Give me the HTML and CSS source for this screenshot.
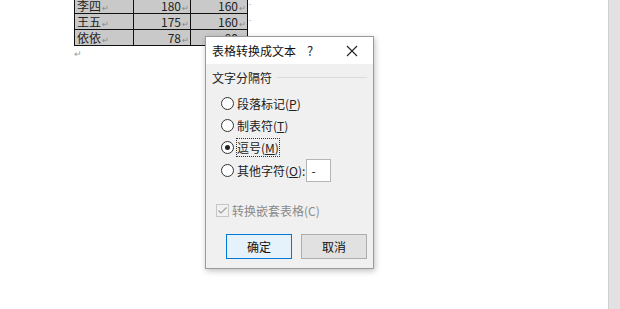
FILE: index.html
```html
<!DOCTYPE html>
<html lang="zh-CN">
<head>
    <meta charset="UTF-8">
    <title>表格转换成文本</title>
    <link rel="stylesheet" href="styles.css">
</head>
<body>
    <div class="workspace">
        <!-- Document page -->
        <div class="page">
            <table class="doc-table">
                <tr>
                    <td class="name">李四<span class="mark">↵</span></td>
                    <td class="num">180<span class="mark">↵</span></td>
                    <td class="num">160<span class="mark">↵</span></td>
                    <td class="row-end">.</td>
                </tr>
                <tr>
                    <td class="name">王五<span class="mark">↵</span></td>
                    <td class="num">175<span class="mark">↵</span></td>
                    <td class="num">160<span class="mark">↵</span></td>
                    <td class="row-end">.</td>
                </tr>
                <tr>
                    <td class="name">依依<span class="mark">↵</span></td>
                    <td class="num">78<span class="mark">↵</span></td>
                    <td class="num">90<span class="mark">↵</span></td>
                    <td class="row-end">.</td>
                </tr>
            </table>
            <div class="para-mark">↵</div>
        </div>

        <!-- Scrollbar -->
        <div class="scrollbar"></div>

        <!-- Dialog -->
        <div class="dialog">
            <div class="title-bar">
                <span class="title">表格转换成文本</span>
                <span class="help">?</span>
                <svg class="close" width="12" height="12" viewBox="0 0 12 12">
                    <path d="M1 1 L11 11 M11 1 L1 11" stroke="#222" stroke-width="1.1" fill="none"/>
                </svg>
            </div>
            <div class="dialog-body">
                <div class="group-label">
                    <span>文字分隔符</span>
                    <span class="group-line"></span>
                </div>
                <div class="options">
                    <div class="option"><span class="radio"></span><span>段落标记(<u>P</u>)</span></div>
                    <div class="option"><span class="radio"></span><span>制表符(<u>T</u>)</span></div>
                    <div class="option"><span class="radio checked"></span><span class="focused">逗号(<u>M</u>)</span></div>
                    <div class="option other">
                        <span class="radio"></span><span>其他字符(<u>O</u>):</span>
                        <span class="char-input">-</span>
                    </div>
                </div>
                <div class="nested">
                    <svg class="check" width="13" height="13" viewBox="0 0 13 13">
                        <rect x="0.5" y="0.5" width="12" height="12" fill="#f0f0f0" stroke="#c6c6c6"/>
                        <path d="M2.5 6.5 L5 9 L10.5 3.5" stroke="#a0a0a0" stroke-width="1.2" fill="none"/>
                    </svg>
                    <span>转换嵌套表格(C)</span>
                </div>
                <div class="buttons">
                    <button class="btn primary">确定</button>
                    <button class="btn">取消</button>
                </div>
            </div>
        </div>
    </div>
</body>
</html>
```

FILE: styles.css
```css
body {
    margin: 0;
    font-family: "Noto Sans CJK SC", "Noto Sans", sans-serif;
    font-size: 12px;
    color: #222;
    background: #fff;
}

.workspace {
    position: relative;
    width: 620px;
    height: 309px;
    overflow: hidden;
    display: flex;
}

.page {
    flex: 1;
    padding-left: 74px;
}

/* Document table */
.doc-table {
    border-collapse: collapse;
    margin-top: -3px;
    font-size: 12px;
}

.doc-table td {
    border: 1px solid #111;
    background: #c9c9c9;
    height: 15px;
    line-height: 15px;
    padding: 0 2px;
    white-space: nowrap;
    overflow: hidden;
}

.doc-table td.name {
    width: 54px;
    text-align: left;
}

.doc-table td.num {
    width: 53px;
    text-align: right;
    padding-right: 1px;
}

.doc-table td.row-end {
    border: none;
    background: none;
    color: #999;
    font-size: 8px;
    line-height: 8px;
    vertical-align: top;
    padding-left: 1px;
}

.mark {
    color: #888;
    font-size: 8px;
    line-height: 8px;
    margin-left: 1px;
}

.para-mark {
    color: #999;
    font-size: 9px;
    line-height: 10px;
    margin-top: 3px;
}

.scrollbar {
    width: 11px;
    background: #e2e2e2;
    border-left: 1px solid #cfcfcf;
}

/* Dialog */
.dialog {
    position: absolute;
    left: 205px;
    top: 36px;
    width: 167px;
    height: 231px;
    background: #f0f0f0;
    border: 1px solid #9a9a9a;
    box-shadow: 1px 2px 6px rgba(0, 0, 0, 0.25);
    display: flex;
    flex-direction: column;
}

.title-bar {
    height: 27px;
    background: #fff;
    display: flex;
    align-items: center;
    padding-left: 6px;
}

.title {
    font-size: 12px;
    color: #111;
}

.help {
    margin-left: 11px;
    font-size: 13px;
}

.close {
    margin-left: 33px;
}

.dialog-body {
    padding: 5px 6px 0 6px;
    display: flex;
    flex-direction: column;
}

.group-label {
    display: flex;
    align-items: center;
    gap: 5px;
    color: #222;
}

.group-line {
    flex: 1;
    height: 1px;
    background: #dcdcdc;
}

.options {
    margin-top: 6px;
    padding-left: 9px;
    display: flex;
    flex-direction: column;
}

.option {
    display: flex;
    align-items: center;
    height: 22px;
}

.radio {
    width: 11px;
    height: 11px;
    border: 1px solid #333;
    border-radius: 50%;
    background: #fff;
    margin-right: 3px;
    position: relative;
}

.radio.checked::after {
    content: "";
    position: absolute;
    left: 3px;
    top: 3px;
    width: 5px;
    height: 5px;
    border-radius: 50%;
    background: #222;
}

.focused {
    outline: 1px dotted #333;
    outline-offset: 0;
}

.option.other {
    height: 25px;
}

.char-input {
    margin-left: 1px;
    width: 25px;
    height: 23px;
    background: #fff;
    border: 1px solid #b5b5b5;
    box-sizing: border-box;
    padding-left: 4px;
    line-height: 21px;
}

.nested {
    margin-top: 19px;
    padding-left: 4px;
    display: flex;
    align-items: center;
    gap: 3px;
    color: #8a8a8a;
}

.buttons {
    margin-top: 15px;
    display: flex;
    gap: 9px;
    padding-left: 14px;
}

.btn {
    width: 66px;
    height: 25px;
    font-family: inherit;
    font-size: 12px;
    color: #111;
    background: #e1e1e1;
    border: 1px solid #adadad;
    padding: 0;
}

.btn.primary {
    background: #e5f1fb;
    border: 1px solid #0078d7;
}
```
